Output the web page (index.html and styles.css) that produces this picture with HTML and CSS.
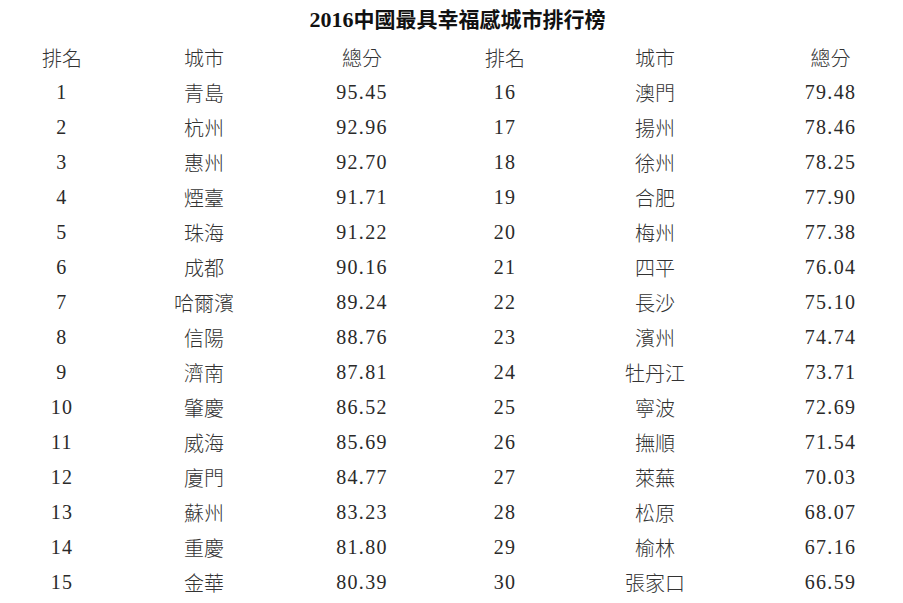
FILE: index.html
```html
<!DOCTYPE html>
<html lang="zh-Hant">
<head>
<meta charset="utf-8">
<title>2016中國最具幸福感城市排行榜</title>
<link rel="stylesheet" href="styles.css">
</head>
<body>
<div class="page">
  <h1 class="title"><span class="num">2016</span>中國最具幸福感城市排行榜</h1>
  <div class="table">
    <div class="cell hd">排名</div><div class="cell hd">城市</div><div class="cell hd">總分</div><div class="cell hd">排名</div><div class="cell hd">城市</div><div class="cell hd c6">總分</div>

    <div class="cell num">1</div><div class="cell">青島</div><div class="cell num">95.45</div><div class="cell num">16</div><div class="cell">澳門</div><div class="cell num c6">79.48</div>
    <div class="cell num">2</div><div class="cell">杭州</div><div class="cell num">92.96</div><div class="cell num">17</div><div class="cell">揚州</div><div class="cell num c6">78.46</div>
    <div class="cell num">3</div><div class="cell">惠州</div><div class="cell num">92.70</div><div class="cell num">18</div><div class="cell">徐州</div><div class="cell num c6">78.25</div>
    <div class="cell num">4</div><div class="cell">煙臺</div><div class="cell num">91.71</div><div class="cell num">19</div><div class="cell">合肥</div><div class="cell num c6">77.90</div>
    <div class="cell num">5</div><div class="cell">珠海</div><div class="cell num">91.22</div><div class="cell num">20</div><div class="cell">梅州</div><div class="cell num c6">77.38</div>
    <div class="cell num">6</div><div class="cell">成都</div><div class="cell num">90.16</div><div class="cell num">21</div><div class="cell">四平</div><div class="cell num c6">76.04</div>
    <div class="cell num">7</div><div class="cell">哈爾濱</div><div class="cell num">89.24</div><div class="cell num">22</div><div class="cell">長沙</div><div class="cell num c6">75.10</div>
    <div class="cell num">8</div><div class="cell">信陽</div><div class="cell num">88.76</div><div class="cell num">23</div><div class="cell">濱州</div><div class="cell num c6">74.74</div>
    <div class="cell num">9</div><div class="cell">濟南</div><div class="cell num">87.81</div><div class="cell num">24</div><div class="cell">牡丹江</div><div class="cell num c6">73.71</div>
    <div class="cell num">10</div><div class="cell">肇慶</div><div class="cell num">86.52</div><div class="cell num">25</div><div class="cell">寧波</div><div class="cell num c6">72.69</div>
    <div class="cell num">11</div><div class="cell">威海</div><div class="cell num">85.69</div><div class="cell num">26</div><div class="cell">撫順</div><div class="cell num c6">71.54</div>
    <div class="cell num">12</div><div class="cell">廈門</div><div class="cell num">84.77</div><div class="cell num">27</div><div class="cell">萊蕪</div><div class="cell num c6">70.03</div>
    <div class="cell num">13</div><div class="cell">蘇州</div><div class="cell num">83.23</div><div class="cell num">28</div><div class="cell">松原</div><div class="cell num c6">68.07</div>
    <div class="cell num">14</div><div class="cell">重慶</div><div class="cell num">81.80</div><div class="cell num">29</div><div class="cell">榆林</div><div class="cell num c6">67.16</div>
    <div class="cell num">15</div><div class="cell">金華</div><div class="cell num">80.39</div><div class="cell num">30</div><div class="cell">張家口</div><div class="cell num c6">66.59</div>
  </div>
</div>
</body>
</html>
```
FILE: styles.css
```css
html, body {
  margin: 0;
  padding: 0;
  background: #ffffff;
}

.page {
  width: 903px;
  height: 603px;
  overflow: hidden;
  font-family: "Liberation Serif", "Noto Sans CJK TC", serif;
  color: #2a2a2a;
}

.title {
  margin: 0;
  height: 40px;
  line-height: 40px;
  font-size: 21px;
  font-weight: 700;
  text-align: center;
  padding-left: 12px;
  color: #111;
  font-family: "Liberation Serif", "Noto Sans CJK TC", serif;
}

.title .num {
  font-family: "Liberation Serif", serif;
  font-size: 22px;
}

.table {
  display: grid;
  grid-template-columns: 124px 160px 156px 130px 170px 163px;
  grid-auto-rows: 35px;
}

.cell {
  display: flex;
  align-items: center;
  justify-content: center;
  font-family: "Noto Sans CJK TC", sans-serif;
  font-size: 20px;
  font-weight: 300;
  color: #333;
}

.cell.num {
  font-family: "Liberation Serif", serif;
  font-size: 20px;
  letter-spacing: 1.3px;
  color: #2a2a2a;
}

.cell.c6 {
  padding-left: 18px;
}
```
